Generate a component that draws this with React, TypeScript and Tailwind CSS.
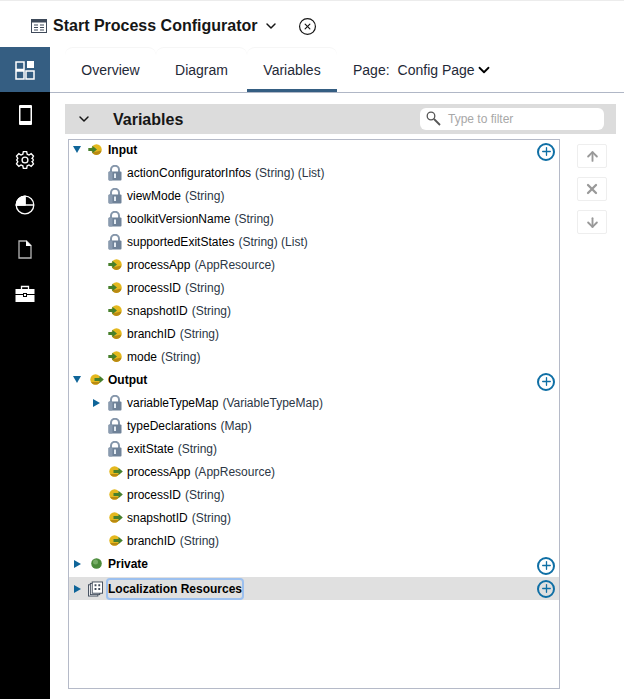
import type { ReactNode } from "react";
import { ChevronDown, ArrowUp, ArrowDown, X, Plus, CircleX } from "lucide-react";

type Kind = "lock" | "in" | "out";

const inputRows: { label: string; type: string; kind: Kind }[] = [
  { label: "actionConfiguratorInfos", type: "(String) (List)", kind: "lock" },
  { label: "viewMode", type: "(String)", kind: "lock" },
  { label: "toolkitVersionName", type: "(String)", kind: "lock" },
  { label: "supportedExitStates", type: "(String) (List)", kind: "lock" },
  { label: "processApp", type: "(AppResource)", kind: "in" },
  { label: "processID", type: "(String)", kind: "in" },
  { label: "snapshotID", type: "(String)", kind: "in" },
  { label: "branchID", type: "(String)", kind: "in" },
  { label: "mode", type: "(String)", kind: "in" },
];

const outputRows: { label: string; type: string; kind: Kind; arrow?: boolean }[] = [
  { label: "variableTypeMap", type: "(VariableTypeMap)", kind: "lock", arrow: true },
  { label: "typeDeclarations", type: "(Map)", kind: "lock" },
  { label: "exitState", type: "(String)", kind: "lock" },
  { label: "processApp", type: "(AppResource)", kind: "out" },
  { label: "processID", type: "(String)", kind: "out" },
  { label: "snapshotID", type: "(String)", kind: "out" },
  { label: "branchID", type: "(String)", kind: "out" },
];

function LockIcon() {
  return (
    <svg width="14" height="16" viewBox="0 0 14 16" className="shrink-0">
      <path d="M3 8V4.800a4 4 0 0 1 8 0V8" fill="none" stroke="#8596aa" strokeWidth="2" />
      <rect x="0.500" y="6.500" width="13" height="9" rx="1" fill="#6f8298" />
      <rect x="0.500" y="6.500" width="4" height="9" rx="1" fill="#8a9bb0" />
      <rect x="6" y="8.500" width="2" height="4.500" fill="#e3ebf2" />
    </svg>
  );
}

function InIcon() {
  return (
    <svg width="14" height="11" viewBox="0 0 14 11" className="shrink-0">
      <circle cx="8.500" cy="5.500" r="5.200" fill="#e4b81e" />
      <path d="M4 8.500a5.200 5.200 0 0 0 9.500-2z" fill="#b98a12" />
      <path d="M0.300 4h4V1.800L9 5.500 4.300 9.200V7h-4z" fill="#47802c" />
    </svg>
  );
}

function OutIcon() {
  return (
    <svg width="14" height="11" viewBox="0 0 14 11" className="shrink-0">
      <circle cx="5.500" cy="5.500" r="5.200" fill="#e4b81e" />
      <path d="M1 8a5.200 5.200 0 0 0 9 0z" fill="#b98a12" />
      <path d="M4.500 4h5V1.800L13.800 5.500 9.500 9.200V7h-5z" fill="#47802c" />
    </svg>
  );
}

function PlusButton({ low }: { low?: boolean }) {
  return (
    <span
      className={
        low
          ? "absolute right-[4px] top-[calc(50%+2px)] flex h-[18px] w-[18px] -translate-y-1/2 items-center justify-center rounded-full border-2 border-[#0f6fa5] text-[#0f6fa5]"
          : "absolute right-[4px] top-1/2 flex h-[18px] w-[18px] -translate-y-1/2 items-center justify-center rounded-full border-2 border-[#0f6fa5] text-[#0f6fa5]"
      }
    >
      <Plus size={13} strokeWidth={2.400} />
    </span>
  );
}

function Caret({ open }: { open?: boolean }) {
  return open ? (
    <span className="h-0 w-0 border-x-[4px] border-t-[7px] border-x-transparent border-t-[#0f6599]" />
  ) : (
    <span className="h-0 w-0 border-y-[4px] border-l-[7px] border-y-transparent border-l-[#0f6599]" />
  );
}

function Row({ label, type, kind, arrow }: { label: string; type: string; kind: Kind; arrow?: boolean }) {
  return (
    <div className="flex h-[23px] items-center">
      <span className="flex w-[32px] justify-end pr-[1px]">{arrow && <Caret />}</span>
      <span className="ml-[6px] flex w-[15px] justify-center">
        {kind === "lock" ? <LockIcon /> : kind === "in" ? <InIcon /> : <span className="ml-[2px]"><OutIcon /></span>}
      </span>
      <span className="ml-[5px] text-black">{label}</span>
      <span className="ml-[4px] text-[#2b3645]">{type}</span>
    </div>
  );
}

function Group({ label, icon, open, children }: { label: string; icon: ReactNode; open?: boolean; children?: ReactNode }) {
  return (
    <>
      <div className="relative flex h-[23px] items-center">
        <span className="flex w-[12px] justify-end"><Caret open={open} /></span>
        <span className="ml-[7px] flex w-[14px] justify-center">{icon}</span>
        <span className="ml-[6px] font-bold text-black">{label}</span>
        <PlusButton low />
      </div>
      {children}
    </>
  );
}

function Sidebar() {
  return (
    <div className="flex w-[50px] shrink-0 flex-col items-center bg-black text-white">
      <div className="flex h-[45px] w-full items-center justify-center bg-[#355e82]">
        <svg width="20" height="20" viewBox="0 0 20 20">
          <path d="M1 2h8v7.500H1zM1 11h8v8H1zM11 11h8v8h-8z" fill="none" stroke="#fff" strokeWidth="1.500" />
          <rect x="12" y="1" width="7" height="7" fill="#fff" />
        </svg>
      </div>
      <div className="flex h-[45px] items-center justify-center">
        <svg width="13" height="20" viewBox="0 0 13 20">
          <rect width="13" height="20" rx="1" fill="#fff" />
          <rect x="1.500" y="3" width="10" height="13" fill="#000" />
        </svg>
      </div>
      <div className="flex h-[45px] items-center justify-center">
        <svg width="20" height="20" viewBox="0 0 24 24" fill="none" stroke="#fff" strokeWidth="1.600">
          <path d="M10 2h4l.6 3 2.200 1 2.600-1.600 2.800 2.800L20.600 10l.4 0 1 2-1 2-.4 0 1.600 2.800-2.800 2.800-2.600-1.600-2.200 1-.6 3h-4l-.6-3-2.200-1-2.600 1.600-2.800-2.800L3.400 14 2 12l1.400-2-1.600-2.800 2.800-2.800L7.200 6l2.200-1z" />
          <circle cx="12" cy="12" r="3.500" />
        </svg>
      </div>
      <div className="flex h-[45px] items-center justify-center">
        <svg width="20" height="20" viewBox="0 0 20 20" fill="none" stroke="#fff" strokeWidth="1.300">
          <circle cx="10" cy="10" r="8.800" />
          <path d="M10 1.200v8.800h8.800M10 10H1.200" />
          <path d="M10 1.200a8.800 8.800 0 0 0-8.800 8.800H10z" fill="#fff" />
        </svg>
      </div>
      <div className="flex h-[44px] items-center justify-center">
        <svg width="14" height="19" viewBox="0 0 14 19" fill="none" stroke="#b5b5b5" strokeWidth="1.300">
          <path d="M1 1h7.500L13 5.500V18H1z" />
          <path d="M8 .5 13.500 6H8z" fill="#fff" stroke="none" />
        </svg>
      </div>
      <div className="flex h-[45px] items-center justify-center">
        <svg width="20" height="17" viewBox="0 0 20 17">
          <path d="M6.500 4V1.500h7V4" fill="none" stroke="#fff" strokeWidth="1.300" />
          <rect x="0.500" y="4" width="19" height="5" fill="#fff" />
          <rect x="0.500" y="10" width="19" height="7" fill="#fff" />
          <rect x="8" y="8" width="4" height="4" fill="#000" />
          <rect x="9" y="9" width="2" height="2" fill="#fff" />
        </svg>
      </div>
    </div>
  );
}

export default function App() {
  return (
    <div className="flex h-[699px] w-[624px] flex-col overflow-hidden bg-white font-['Liberation_Sans',Arial,sans-serif] text-[12px]">
      <div className="flex h-[47px] shrink-0 items-center border-t border-t-[#ececec] pl-[31px] pt-[4px]">
        <svg width="16" height="14" viewBox="0 0 16 14">
          <rect x="0.500" y="0.500" width="15" height="13" fill="#fff" stroke="#3f4a5a" />
          <rect x="0.500" y="0.500" width="15" height="3" fill="#3f4a5a" />
          <path d="M3 6h4M3 8.500h4M3 11h4M9 6h4M9 8.500h4M9 11h4" stroke="#3f4a5a" strokeWidth="1.200" />
        </svg>
        <span className="ml-[6px] text-[16px] font-bold text-[#161616]">Start Process Configurator</span>
        <ChevronDown className="ml-[6px] text-[#161616]" size={16} strokeWidth={2.200} />
        <CircleX className="ml-[19px] text-[#161616]" size={19} strokeWidth={1.500} />
      </div>
      <div className="flex min-h-0 flex-1">
        <Sidebar />
        <div className="flex min-w-0 flex-1 flex-col">
          <div className="flex h-[46px] shrink-0 items-stretch border-b border-[#b0b7c6] pl-[15px] text-[14px] text-[#1f2937]">
            <div className="flex w-[91px] items-center justify-center rounded-t-lg border-t border-[#f6f6f6]">Overview</div>
            <div className="flex w-[91px] items-center justify-center rounded-t-lg border-t border-[#f6f6f6]">Diagram</div>
            <div className="flex w-[90px] items-center justify-center rounded-t-lg border-t border-b-[3px] border-t-[#f6f6f6] border-b-[#355e82] pt-[3px]">Variables</div>
            <div className="ml-[16px] flex items-center pt-[1px]">
              <span>Page:</span>
              <span className="ml-[8px]">Config Page</span>
              <ChevronDown className="text-black" size={18} strokeWidth={2.400} />
            </div>
          </div>
          <div className="ml-[15px] mt-[11px] flex h-[30px] w-[551px] shrink-0 items-center bg-[#dcdcdc]">
            <ChevronDown className="ml-[11px] text-[#161616]" size={16} strokeWidth={2.200} />
            <span className="ml-[21px] pt-[2px] text-[16px] font-bold text-[#161616]">Variables</span>
            <div className="ml-auto mr-[12px] flex h-[22px] w-[184px] items-center rounded-md bg-white pl-[6px] text-[#a8a8a8]">
              <svg width="15" height="15" viewBox="0 0 15 15" fill="none" stroke="#555" className="-mt-[2px] shrink-0">
                <circle cx="5" cy="5" r="3.800" strokeWidth="1.300" />
                <path d="M8 8l6 6" strokeWidth="1.800" />
              </svg>
              <span className="ml-[7px]">Type to filter</span>
            </div>
          </div>
          <div className="mt-[5px] flex min-h-0">
            <div className="ml-[18px] h-[550px] w-[492px] shrink-0 border border-[#b5bac8]">
              <div className="-mt-[2px]">
                <Group label="Input" open icon={<InIcon />}>
                  {inputRows.map((r) => (
                    <Row key={r.label} {...r} />
                  ))}
                </Group>
                <Group label="Output" open icon={<span className="ml-[3px]"><OutIcon /></span>}>
                  {outputRows.map((r) => (
                    <Row key={r.label} {...r} />
                  ))}
                </Group>
                <Group
                  label="Private"
                  icon={
                    <span className="ml-[2px]">
                      <svg width="11" height="11" viewBox="0 0 11 11" className="block">
                        <circle cx="5.500" cy="5.500" r="5.300" fill="#4b8b3b" />
                        <circle cx="4.500" cy="4" r="2.500" fill="#76ad66" />
                      </svg>
                    </span>
                  }
                />
                <div className="relative mt-[2px] flex h-[23px] items-center bg-[#e0e0e0]">
                  <span className="flex w-[12px] justify-end"><Caret /></span>
                  <span className="ml-[7px] flex w-[14px] justify-center">
                    <svg width="15" height="16" viewBox="0 0 16 16" fill="#fff" stroke="#3f4a5a" className="shrink-0">
                      <rect x="0.500" y="3.500" width="10" height="12" />
                      <rect x="2.500" y="2" width="10" height="12" />
                      <rect x="4.500" y="0.500" width="11" height="12" />
                      <path d="M7 3h2v2H7zM11 3h2v2h-2zM7 7h2v2H7zM11 7h2v2h-2z" fill="#3f4a5a" stroke="none" />
                    </svg>
                  </span>
                  <span className="ml-[6px] rounded-[2px] font-bold text-black outline outline-2 outline-[#9cc0ef]">Localization Resources</span>
                  <PlusButton />
                </div>
              </div>
            </div>
            <div className="ml-[17px] mt-[5px] flex flex-col gap-[9px] text-[#999]">
              <div className="flex h-[24px] w-[30px] items-center justify-center rounded-[2px] border border-[#eeeeee]"><ArrowUp size={15} strokeWidth={3} /></div>
              <div className="flex h-[24px] w-[30px] items-center justify-center rounded-[2px] border border-[#eeeeee]"><X size={16} strokeWidth={3.400} /></div>
              <div className="flex h-[24px] w-[30px] items-center justify-center rounded-[2px] border border-[#eeeeee]"><ArrowDown size={15} strokeWidth={3} /></div>
            </div>
          </div>
        </div>
      </div>
    </div>
  );
}
